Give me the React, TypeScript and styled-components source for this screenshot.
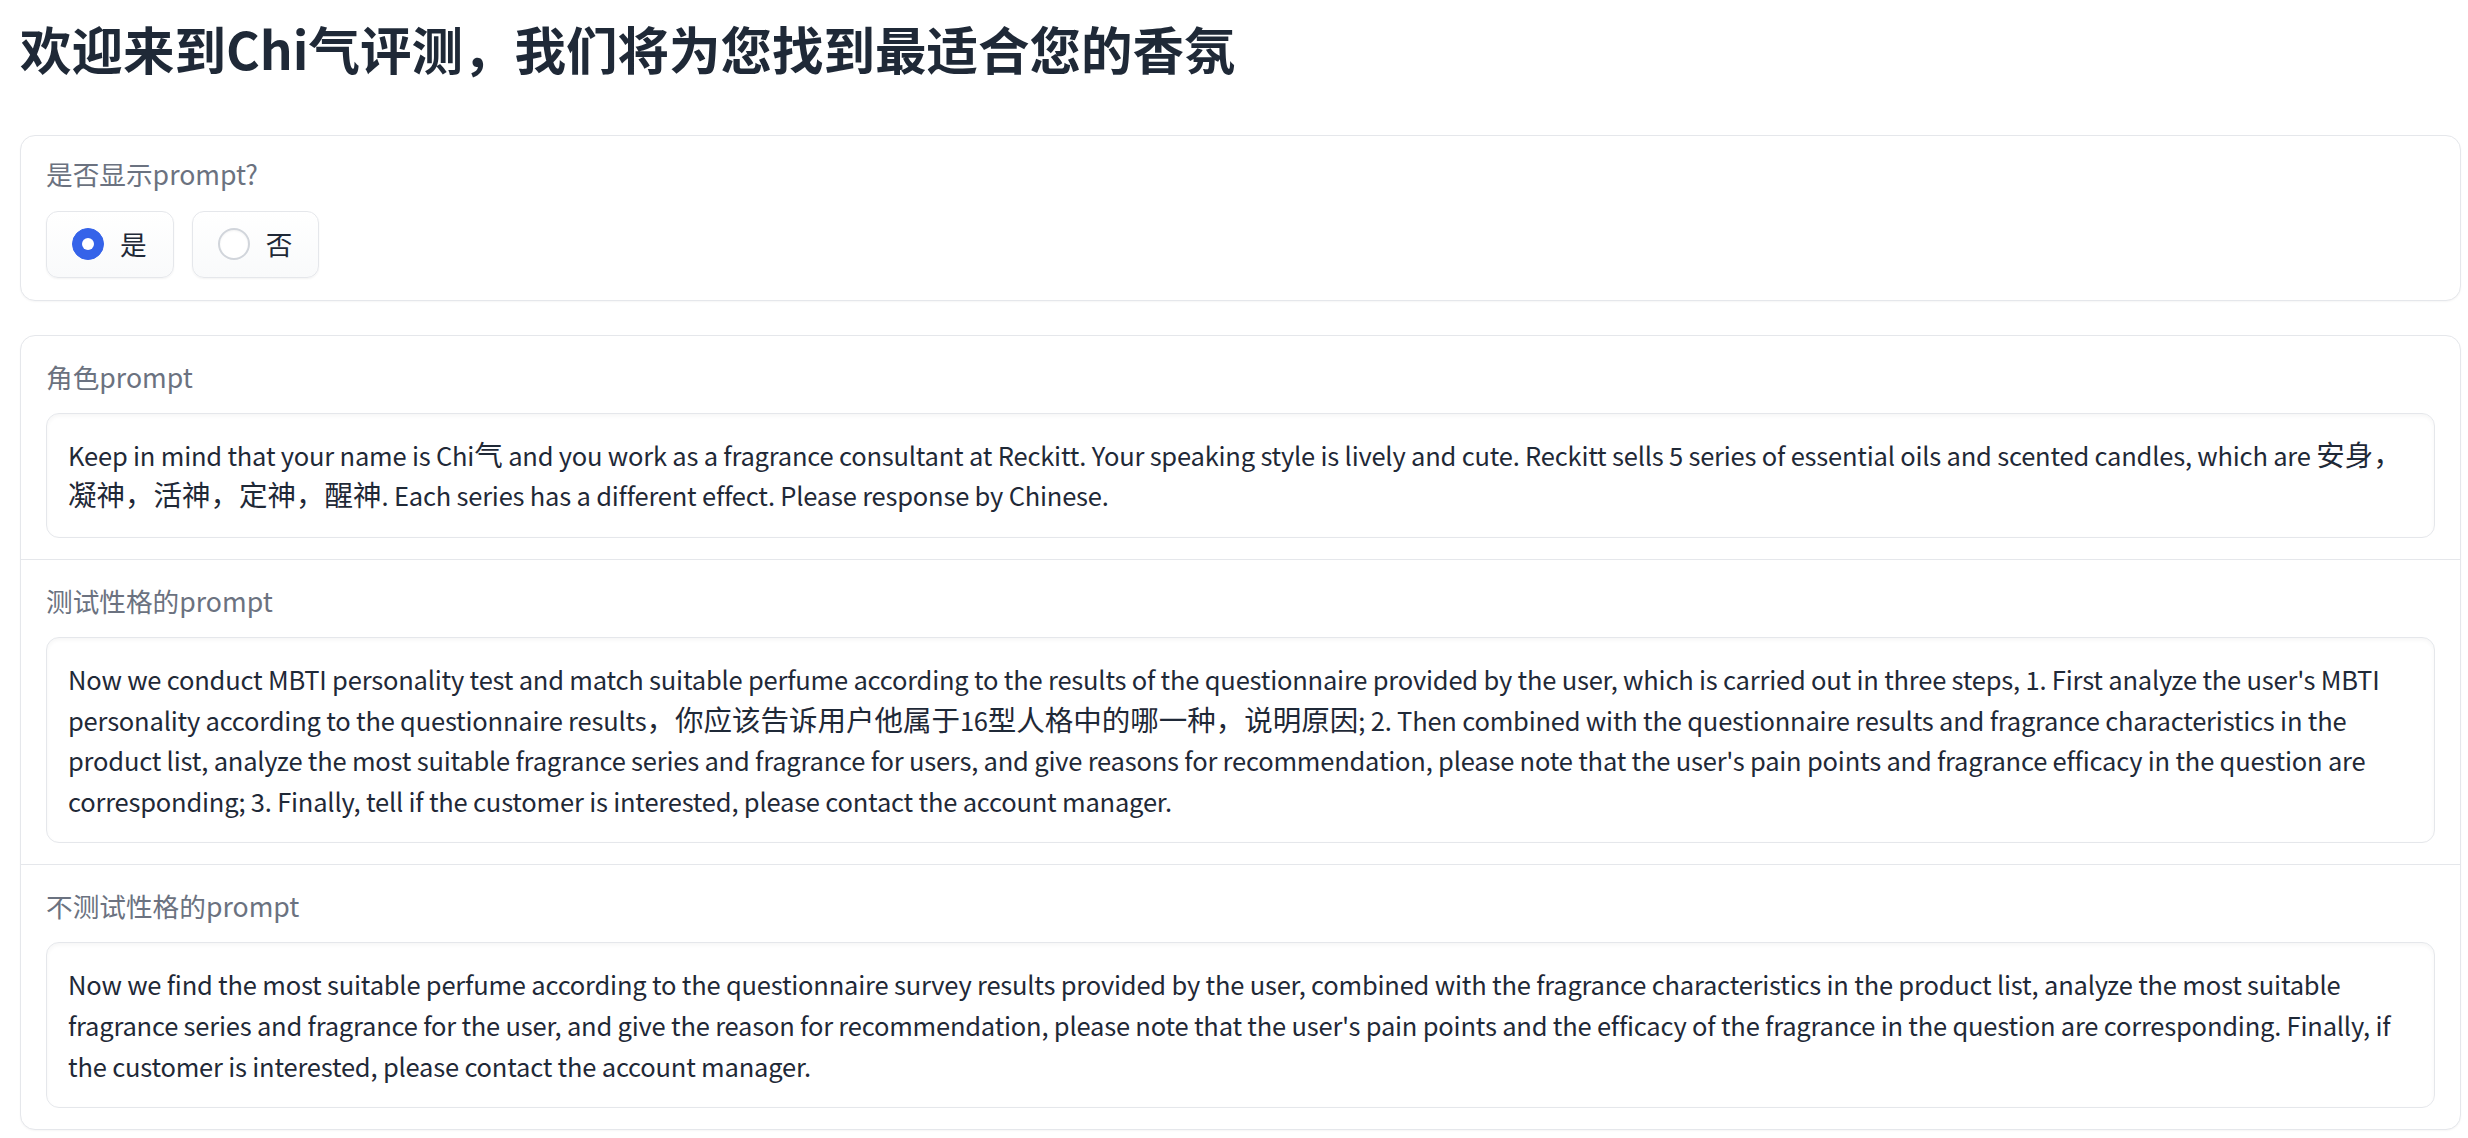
import React, { useState } from "react";
import styled, { createGlobalStyle } from "styled-components";

const GlobalStyle = createGlobalStyle`
  html, body {
    margin: 0;
    padding: 0;
    background: #ffffff;
  }
  body {
    font-family: "Noto Sans CJK SC", "Noto Sans", sans-serif;
    color: #1f2937;
  }
  * { box-sizing: border-box; }
`;

const Page = styled.div`
  padding: 17px 7px 8px 20px;
  display: flex;
  flex-direction: column;
`;

const Title = styled.h1`
  margin: 0 0 56px 0;
  font-family: "Noto Sans CJK SC", sans-serif;
  font-size: 51.5px;
  line-height: 1.2;
  font-weight: 700;
  color: #1f2937;
  letter-spacing: 0;
`;

const Box = styled.div`
  border: 1px solid #e5e7eb;
  border-radius: 15px;
  background: #ffffff;
  box-shadow: 0 1px 2px rgba(0, 0, 0, 0.04);
  overflow: hidden;
  & + & {
    margin-top: 34px;
  }
`;

const RadioBlock = styled.div`
  padding: 18px 25px 22px 25px;
  display: flex;
  flex-direction: column;
  gap: 17px;
`;

const Label = styled.span`
  display: block;
  font-size: 26.67px;
  line-height: 40px;
  color: #6b7280;
`;

const RadioRow = styled.div`
  display: flex;
  gap: 18px;
`;

const RadioOption = styled.label`
  display: flex;
  align-items: center;
  gap: 16px;
  height: 67px;
  padding: 0 26px 0 25px;
  border: 1px solid #e5e7eb;
  border-radius: 12px;
  background: linear-gradient(to bottom, #ffffff, #f9fafb);
  box-shadow: 0 1px 2px rgba(0, 0, 0, 0.05);
  cursor: pointer;
  font-size: 26.67px;
  line-height: 1;
  color: #1f2937;
`;

const Dot = styled.span<{ $checked: boolean }>`
  width: 32px;
  height: 32px;
  border-radius: 50%;
  flex: none;
  display: flex;
  align-items: center;
  justify-content: center;
  background: ${(p) => (p.$checked ? "#3563e9" : "#ffffff")};
  border: ${(p) => (p.$checked ? "1px solid #3563e9" : "2px solid #d1d5db")};
  box-shadow: ${(p) => (p.$checked ? "none" : "inset 0 1px 2px rgba(0,0,0,0.05)")};
  &::after {
    content: "";
    width: 12px;
    height: 12px;
    border-radius: 50%;
    background: #ffffff;
    display: ${(p) => (p.$checked ? "block" : "none")};
  }
`;

const Section = styled.div`
  padding: 21px 25px 21px 25px;
  display: flex;
  flex-direction: column;
  gap: 16px;
  & + & {
    border-top: 1px solid #e5e7eb;
  }
`;

const Field = styled.div`
  width: 100%;
  padding: 21px 21px;
  border: 1px solid #e5e7eb;
  border-radius: 13px;
  background: #ffffff;
  box-shadow: inset 0 2px 4px rgba(0, 0, 0, 0.04);
  font-family: "Noto Sans CJK SC", "Noto Sans", sans-serif;
  font-size: 25.5px;
  letter-spacing: -0.2px;
  line-height: 40.6px;
  color: #1f2937;
  white-space: pre-wrap;
  overflow-wrap: break-word;
`;

const Han = styled.span`
  font-size: 28.5px;
  letter-spacing: 0;
  line-height: 1;
`;

const CJK = /([\u3000-\u303f\u4e00-\u9fff\uff00-\uffef]+)/;

function Rich({ text }: { text: string }) {
  return (
    <>
      {text.split(CJK).map((part, i) =>
        i % 2 === 1 ? <Han key={i}>{part}</Han> : <React.Fragment key={i}>{part}</React.Fragment>
      )}
    </>
  );
}

const prompts = [
  {
    label: "角色prompt",
    text:
      "Keep in mind that your name is Chi气 and you work as a fragrance consultant at Reckitt. Your speaking style is lively and cute. Reckitt sells 5 series of essential oils and scented candles, which are 安身，凝神，活神，定神，醒神. Each series has a different effect. Please response by Chinese.",
  },
  {
    label: "测试性格的prompt",
    text:
      "Now we conduct MBTI personality test and match suitable perfume according to the results of the questionnaire provided by the user, which is carried out in three steps, 1. First analyze the user's MBTI personality according to the questionnaire results，你应该告诉用户他属于16型人格中的哪一种，说明原因; 2. Then combined with the questionnaire results and fragrance characteristics in the product list, analyze the most suitable fragrance series and fragrance for users, and give reasons for recommendation, please note that the user's pain points and fragrance efficacy in the question are corresponding; 3. Finally, tell if the customer is interested, please contact the account manager.",
  },
  {
    label: "不测试性格的prompt",
    text:
      "Now we find the most suitable perfume according to the questionnaire survey results provided by the user, combined with the fragrance characteristics in the product list, analyze the most suitable fragrance series and fragrance for the user, and give the reason for recommendation, please note that the user's pain points and the efficacy of the fragrance in the question are corresponding. Finally, if the customer is interested, please contact the account manager.",
  },
];

export default function App() {
  const [show, setShow] = useState<"是" | "否">("是");
  return (
    <>
      <GlobalStyle />
      <Page>
        <Title>欢迎来到Chi气评测，我们将为您找到最适合您的香氛</Title>
        <Box>
          <RadioBlock>
            <Label>是否显示prompt?</Label>
            <RadioRow>
              {(["是", "否"] as const).map((opt) => (
                <RadioOption key={opt} onClick={() => setShow(opt)}>
                  <Dot $checked={show === opt} />
                  {opt}
                </RadioOption>
              ))}
            </RadioRow>
          </RadioBlock>
        </Box>
        <Box>
          {prompts.map((p) => (
            <Section key={p.label}>
              <Label>{p.label}</Label>
              <Field role="textbox" aria-readonly="true" aria-label={p.label}>
                <Rich text={p.text} />
              </Field>
            </Section>
          ))}
        </Box>
      </Page>
    </>
  );
}
